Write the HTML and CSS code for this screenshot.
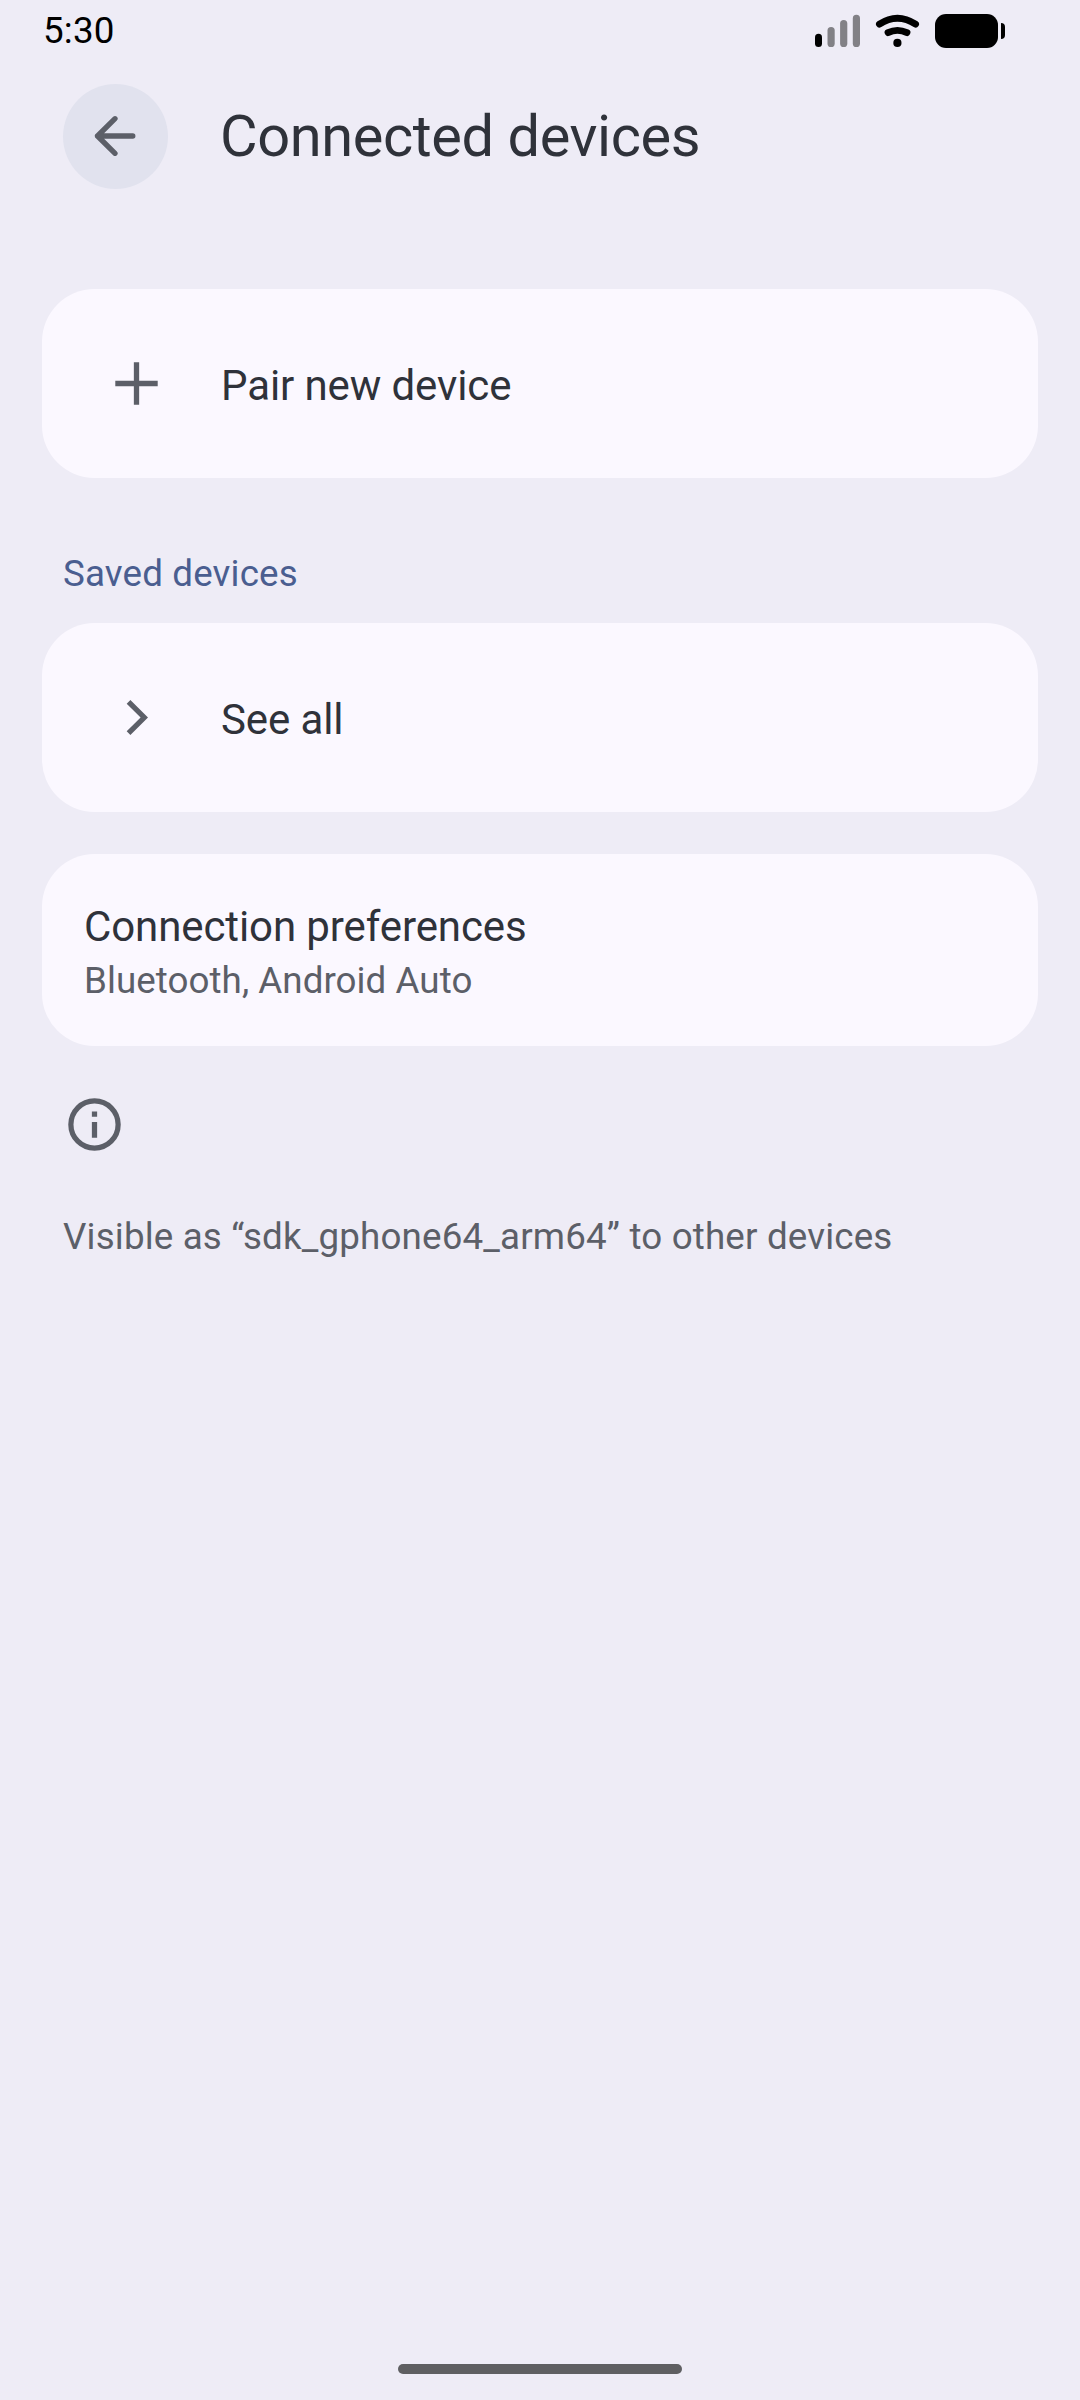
FILE: index.html
```html
<!DOCTYPE html>
<html lang="en">
<head>
<meta charset="utf-8">
<title>Connected devices</title>
<link rel="stylesheet" href="styles.css">
</head>
<body>
<div class="screen">
  <div class="status-bar">
    <span class="clock">5:30</span>
    <svg class="status-icons" width="192" height="36" viewBox="814 13 192 36" aria-hidden="true">
      <rect x="815" y="33.7" width="7" height="13.3" rx="3.5"/>
      <g fill="#000" opacity=".45">
        <rect x="827.5" y="27" width="7.2" height="20" rx="3.6"/>
        <rect x="840.1" y="20" width="7.2" height="27" rx="3.6"/>
        <rect x="852.8" y="14.8" width="7.2" height="32.2" rx="3.6"/>
      </g>
      <g fill="none" stroke="#000" stroke-width="6.8" stroke-linecap="round">
        <path d="M879.4 24.2Q897.4 12.2 915.6 24.2"/>
        <path d="M888 32.6Q897.4 28 907 32.6"/>
      </g>
      <circle cx="897.4" cy="42.9" r="4.1"/>
      <rect x="935" y="14" width="63" height="34" rx="11"/>
      <path d="M1001 23Q1005 23 1005 27V35Q1005 39 1001 39Z"/>
    </svg>
  </div>

  <header class="app-bar">
    <button class="back" aria-label="Back">
      <svg width="105" height="105" viewBox="0 0 105 105">
        <path d="M69.8 52H34.5M52 34.7L34.5 52L52 69.3" fill="none" stroke="currentColor" stroke-width="5.3" stroke-linecap="round" stroke-linejoin="round"/>
      </svg>
    </button>
    <h1 class="title">Connected devices</h1>
  </header>

  <main class="content">
    <div class="card row">
      <svg class="row-icon" width="63" height="63" viewBox="0 0 63 63">
        <path d="M31.5 10.3V52.7M10.3 31.5H52.7" stroke="currentColor" stroke-width="5.3"/>
      </svg>
      <span class="row-label">Pair new device</span>
    </div>

    <h2 class="section">Saved devices</h2>
    <div class="card row">
      <svg class="row-icon" width="63" height="63" viewBox="0 0 63 63">
        <path d="M21.7 17.7L25.4 14L43 31.5L25.4 49L21.7 45.3L35.6 31.5Z" fill="currentColor"/>
      </svg>
      <span class="row-label">See all</span>
    </div>

    <div class="card preferences">
      <div class="pref-title">Connection preferences</div>
      <div class="pref-summary">Bluetooth, Android Auto</div>
    </div>

    <footer class="note">
      <svg class="info" width="63" height="63" viewBox="0 0 24 24">
        <circle cx="12" cy="12" r="9" fill="none" stroke="currentColor" stroke-width="2"/>
        <path d="M11 7H13V9H11ZM11 11H13V17H11Z" fill="currentColor"/>
      </svg>
      <p class="note-text">Visible as “sdk_gphone64_arm64” to other devices</p>
    </footer>
  </main>

  <div class="gesture-bar"></div>
</div>
</body>
</html>
```
FILE: styles.css
```css
* {
  box-sizing: border-box;
}

body {
  margin: 0;
  background: #eeecf6;
  color: #2f323a;
  font-family: Roboto, "Noto Sans", sans-serif;
  font-weight: 400;
}

h1, h2, p {
  margin: 0;
  font-weight: 400;
}

svg {
  display: block;
  flex: none;
}

.screen {
  display: flex;
  flex-direction: column;
  width: 1080px;
  height: 2400px;
  overflow: hidden;
}

.status-bar {
  display: flex;
  justify-content: space-between;
  align-items: flex-start;
  height: 84px;
  padding: 8px 74px 0 43px;
  color: #000;
}

.clock {
  font-size: 36.75px;
  line-height: 45px;
  letter-spacing: 0.2px;
}

.status-icons {
  margin-top: 5px;
}

.app-bar {
  display: flex;
  align-items: center;
  gap: 52px;
  height: 105px;
  padding-left: 63px;
}

.back {
  width: 105px;
  height: 105px;
  padding: 0;
  border: 0;
  border-radius: 50%;
  background: #e1e2ee;
  color: #5c5f68;
}

.title {
  padding-bottom: 2px;
  font-size: 57.75px;
  line-height: 68px;
  letter-spacing: -0.41px;
}

.content {
  flex: 1;
  padding: 100px 42px 0;
}

.card {
  border-radius: 52.5px;
  background: #fbf8ff;
}

.row {
  display: flex;
  align-items: center;
  gap: 53px;
  height: 189px;
  padding-left: 63px;
}

.row-icon,
.note {
  color: #5c5f68;
}

.row-label {
  padding-top: 4px;
  font-size: 42px;
  line-height: 50px;
  letter-spacing: -0.1px;
}

.section {
  margin: 74px 0 27px 21px;
  color: #4a5e90;
  font-size: 36.75px;
  line-height: 44px;
  letter-spacing: 0.15px;
}

.preferences {
  height: 192px;
  margin-top: 42px;
  padding: 47px 42px 0;
}

.pref-title {
  font-size: 42px;
  line-height: 52px;
  letter-spacing: -0.1px;
}

.pref-summary {
  color: #5c5f68;
  font-size: 36.75px;
  line-height: 56px;
  letter-spacing: 0.05px;
}

.note {
  padding: 47px 21px 0;
}

.note-text {
  margin-top: 59px;
  font-size: 36.75px;
  line-height: 44px;
  letter-spacing: 0.16px;
}

.gesture-bar {
  width: 284px;
  height: 10px;
  margin: 0 auto 26px;
  border-radius: 5px;
  background: #5f5f62;
}
```
